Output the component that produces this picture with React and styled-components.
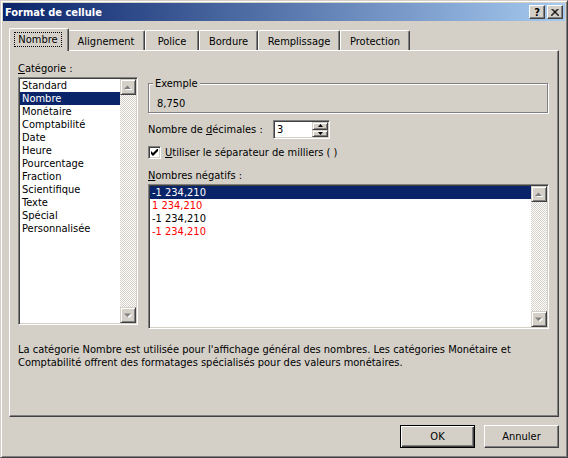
import React from "react";
import styled, { createGlobalStyle } from "styled-components";

const GlobalStyle = createGlobalStyle`
  html, body {
    margin: 0;
    padding: 0;
    background: #d4d0c8;
  }
  body {
    font-family: "DejaVu Sans Condensed", "Liberation Sans", Arial, sans-serif;
    font-size: 11px;
    color: #000;
  }
`;

const Window = styled.div`
  width: 568px;
  height: 458px;
  box-sizing: border-box;
  background: #d4d0c8;
  border: 1px solid;
  border-color: #d4d0c8 #404040 #404040 #d4d0c8;
  box-shadow: inset 1px 1px #fff, inset -1px -1px #808080;
  padding: 2px;
  display: flex;
  flex-direction: column;
`;

const TitleBar = styled.div`
  height: 18px;
  display: flex;
  align-items: center;
  padding: 0 2px;
  background: linear-gradient(to right, #0a246a, #a6caf0);
  color: #fff;
  font-weight: bold;
`;

const TitleButtons = styled.div`
  margin-left: auto;
  display: flex;
  gap: 2px;
`;

const CaptionButton = styled.div`
  width: 16px;
  height: 14px;
  box-sizing: border-box;
  background: #d4d0c8;
  border: 1px solid;
  border-color: #fff #404040 #404040 #fff;
  box-shadow: inset -1px -1px #808080;
  display: flex;
  align-items: center;
  justify-content: center;
  color: #000;
  font-size: 11px;
  font-weight: bold;
  line-height: 1;
`;

const Body = styled.div`
  flex: 1;
  display: flex;
  flex-direction: column;
  padding: 7px 6px 0;
`;

const TabStrip = styled.div`
  height: 22px;
  display: flex;
  align-items: flex-end;
  padding-left: 2px;
`;

const Tab = styled.div`
  width: ${(p) => (p.$active ? p.$w + 4 : p.$w)}px;
  height: ${(p) => (p.$active ? 23 : 20)}px;
  margin: ${(p) => (p.$active ? "0 -2px -1px" : "0")};
  position: relative;
  z-index: ${(p) => (p.$active ? 1 : 0)};
  box-sizing: border-box;
  background: #d4d0c8;
  border-top: 1px solid #fff;
  border-left: 1px solid #fff;
  border-right: 1px solid #404040;
  border-radius: 2px 2px 0 0;
  box-shadow: inset -1px 0 #808080;
  display: flex;
  justify-content: center;
  padding-top: 4px;
  line-height: 13px;
`;

const TabFocus = styled.span`
  align-self: flex-start;
  padding: 0 3px;
  margin-left: -2px;
  outline: 1px dotted #000;
  outline-offset: 0;
`;

const Panel = styled.div`
  height: 367px;
  box-sizing: border-box;
  border: 1px solid;
  border-color: #fff #404040 #404040 #fff;
  box-shadow: inset -1px -1px #808080;
  padding: 11px 0 0 8px;
`;

const PanelGrid = styled.div`
  display: grid;
  grid-template-columns: 120px 401px;
  column-gap: 10px;
  align-items: start;
`;

const Column = styled.div`
  display: flex;
  flex-direction: column;
  padding-top: ${(p) => p.$top || 0}px;
`;

const Label = styled.div`
  line-height: 13px;
  margin-top: ${(p) => p.$mt || 0}px;
  margin-bottom: ${(p) => p.$mb || 0}px;
  white-space: nowrap;
`;

const ListBox = styled.div`
  width: ${(p) => p.$w}px;
  height: ${(p) => p.$h}px;
  box-sizing: border-box;
  border: 1px solid;
  border-color: #808080 #fff #fff #808080;
  box-shadow: inset 1px 1px #404040, inset -1px -1px #d4d0c8;
  background: #fff;
  padding: 1px;
  display: flex;
`;

const Items = styled.div`
  flex: 1;
  display: flex;
  flex-direction: column;
`;

const Item = styled.div`
  height: 13px;
  line-height: 13px;
  padding-left: 2px;
  white-space: nowrap;
  background: ${(p) => (p.$selected ? "#0a246a" : "transparent")};
  color: ${(p) => (p.$selected ? "#fff" : p.$color || "#000")};
`;

const ScrollBar = styled.div`
  width: 16px;
  display: flex;
  flex-direction: column;
`;

const ScrollTrack = styled.div`
  flex: 1;
  background-image: conic-gradient(#d4d0c8 25%, #fff 0 50%, #d4d0c8 0 75%, #fff 0);
  background-size: 2px 2px;
`;

const ScrollButton = styled.div`
  width: 16px;
  height: 16px;
  box-sizing: border-box;
  background: #d4d0c8;
  border: 1px solid;
  border-color: #d4d0c8 #404040 #404040 #d4d0c8;
  box-shadow: inset 1px 1px #fff, inset -1px -1px #808080;
  display: flex;
  align-items: center;
  justify-content: center;
`;

const GroupBox = styled.div`
  width: 400px;
  box-sizing: border-box;
  border: 1px solid #808080;
  box-shadow: inset 1px 1px #fff, 1px 1px #fff;
  padding-bottom: 2px;
`;

const Legend = styled.div`
  display: table;
  margin: -7px 0 0 4px;
  padding: 0 2px;
  background: #d4d0c8;
  line-height: 13px;
`;

const GroupValue = styled.div`
  margin-top: 7px;
  padding-left: 8px;
  line-height: 13px;
`;

const Row = styled.div`
  display: flex;
  align-items: center;
  height: ${(p) => p.$h}px;
  margin-top: ${(p) => p.$mt}px;
  gap: ${(p) => p.$gap || 0}px;
`;

const RowLabel = styled.div`
  width: 125px;
  line-height: 13px;
  white-space: nowrap;
`;

const Spin = styled.div`
  width: 57px;
  height: 19px;
  box-sizing: border-box;
  border: 1px solid;
  border-color: #808080 #fff #fff #808080;
  box-shadow: inset 1px 1px #404040, inset -1px -1px #d4d0c8;
  background: #fff;
  padding: 1px;
  display: flex;
`;

const SpinValue = styled.div`
  flex: 1;
  padding-left: 2px;
  line-height: 15px;
`;

const SpinButtons = styled.div`
  width: 16px;
  display: flex;
  flex-direction: column;
`;

const SpinButton = styled.div`
  flex: 1;
  box-sizing: border-box;
  background: #d4d0c8;
  border: 1px solid;
  border-color: #d4d0c8 #404040 #404040 #d4d0c8;
  box-shadow: inset 1px 1px #fff, inset -1px -1px #808080;
  display: flex;
  align-items: center;
  justify-content: center;
`;

const CheckBox = styled.div`
  width: 13px;
  height: 13px;
  box-sizing: border-box;
  border: 1px solid;
  border-color: #808080 #fff #fff #808080;
  box-shadow: inset 1px 1px #404040, inset -1px -1px #d4d0c8;
  background: #fff;
  display: flex;
  align-items: center;
  justify-content: center;
`;

const Description = styled.div`
  margin-top: 14px;
  line-height: 13px;
`;

const Footer = styled.div`
  display: flex;
  justify-content: flex-end;
  gap: 9px;
  padding-top: 8px;
`;

const Button = styled.button`
  width: 75px;
  height: 23px;
  box-sizing: border-box;
  font: inherit;
  color: #000;
  background: #d4d0c8;
  padding: 0;
  border: 1px solid;
  border-color: ${(p) => (p.$default ? "#000" : "#fff #404040 #404040 #fff")};
  box-shadow: ${(p) =>
    p.$default
      ? "inset 1px 1px #fff, inset -1px -1px #404040, inset -2px -2px #808080"
      : "inset -1px -1px #808080"};
`;

const Arrow = ({ down }) => (
  <svg width="8" height="5" viewBox="0 0 8 5">
    <polygon
      points={down ? "1,1 8,1 4.5,4.5" : "1,4.5 8,4.5 4.5,1"}
      fill="#fff"
      transform="translate(0.5,0.5)"
    />
    <polygon points={down ? "0,0.5 7,0.5 3.5,4" : "0,4 7,4 3.5,0.5"} fill="#808080" />
  </svg>
);

const SmallArrow = ({ down }) => (
  <svg width="5" height="3" viewBox="0 0 5 3">
    <polygon points={down ? "0,0 5,0 2.5,3" : "0,3 5,3 2.5,0"} fill="#000" />
  </svg>
);

const ScrollBarView = () => (
  <ScrollBar>
    <ScrollButton>
      <Arrow />
    </ScrollButton>
    <ScrollTrack />
    <ScrollButton>
      <Arrow down />
    </ScrollButton>
  </ScrollBar>
);

const tabs = [
  { label: "Nombre", w: 56, active: true },
  { label: "Alignement", w: 78 },
  { label: "Police", w: 54 },
  { label: "Bordure", w: 59 },
  { label: "Remplissage", w: 82 },
  { label: "Protection", w: 70 },
];

const categories = [
  "Standard",
  "Nombre",
  "Monétaire",
  "Comptabilité",
  "Date",
  "Heure",
  "Pourcentage",
  "Fraction",
  "Scientifique",
  "Texte",
  "Spécial",
  "Personnalisée",
];

const negatives = [
  { text: "-1 234,210", color: "#000", selected: true },
  { text: "1 234,210", color: "#ff0000" },
  { text: "-1 234,210", color: "#000" },
  { text: "-1 234,210", color: "#ff0000" },
];

const App = () => {
  return (
    <>
      <GlobalStyle />
      <Window>
        <TitleBar>
          Format de cellule
          <TitleButtons>
            <CaptionButton>?</CaptionButton>
            <CaptionButton>
              <svg width="8" height="7" viewBox="0 0 8 7">
                <path d="M0.5 0 L7.5 7 M1.5 0 L8.5 7 M7.5 0 L0.5 7 M6.5 0 L-0.5 7" stroke="#000" strokeWidth="1" />
              </svg>
            </CaptionButton>
          </TitleButtons>
        </TitleBar>

        <Body>
          <TabStrip>
            {tabs.map((t) => (
              <Tab key={t.label} $w={t.w} $active={t.active}>
                {t.active ? <TabFocus>{t.label}</TabFocus> : t.label}
              </Tab>
            ))}
          </TabStrip>

          <Panel>
            <PanelGrid>
              <Column>
                <Label $mb={2}>
                  <u>C</u>atégorie :
                </Label>
                <ListBox $w={120} $h={248}>
                  <Items>
                    {categories.map((c) => (
                      <Item key={c} $selected={c === "Nombre"}>
                        {c}
                      </Item>
                    ))}
                  </Items>
                  <ScrollBarView />
                </ListBox>
              </Column>

              <Column $top={21}>
                <GroupBox>
                  <Legend>Exemple</Legend>
                  <GroupValue>8,750</GroupValue>
                </GroupBox>

                <Row $h={19} $mt={7}>
                  <RowLabel>
                    Nombre de <u>d</u>écimales :
                  </RowLabel>
                  <Spin>
                    <SpinValue>3</SpinValue>
                    <SpinButtons>
                      <SpinButton>
                        <SmallArrow />
                      </SpinButton>
                      <SpinButton>
                        <SmallArrow down />
                      </SpinButton>
                    </SpinButtons>
                  </Spin>
                </Row>

                <Row $h={13} $mt={7} $gap={4}>
                  <CheckBox>
                    <svg width="7" height="7" viewBox="0 0 7 7">
                      <path d="M0 2 L2 4 L7 -1 L7 2 L2 7 L0 5 Z" fill="#000" />
                    </svg>
                  </CheckBox>
                  <Label>
                    <u>U</u>tiliser le séparateur de milliers (&nbsp;)
                  </Label>
                </Row>

                <Label $mt={10} $mb={2}>
                  <u>N</u>ombres négatifs :
                </Label>
                <ListBox $w={401} $h={145}>
                  <Items>
                    {negatives.map((n, i) => (
                      <Item key={i} $selected={n.selected} $color={n.color}>
                        {n.text}
                      </Item>
                    ))}
                  </Items>
                  <ScrollBarView />
                </ListBox>
              </Column>
            </PanelGrid>

            <Description>
              La catégorie Nombre est utilisée pour l'affichage général des nombres. Les catégories Monétaire et
              <br />
              Comptabilité offrent des formatages spécialisés pour des valeurs monétaires.
            </Description>
          </Panel>

          <Footer>
            <Button $default>OK</Button>
            <Button>Annuler</Button>
          </Footer>
        </Body>
      </Window>
    </>
  );
};

export default App;
